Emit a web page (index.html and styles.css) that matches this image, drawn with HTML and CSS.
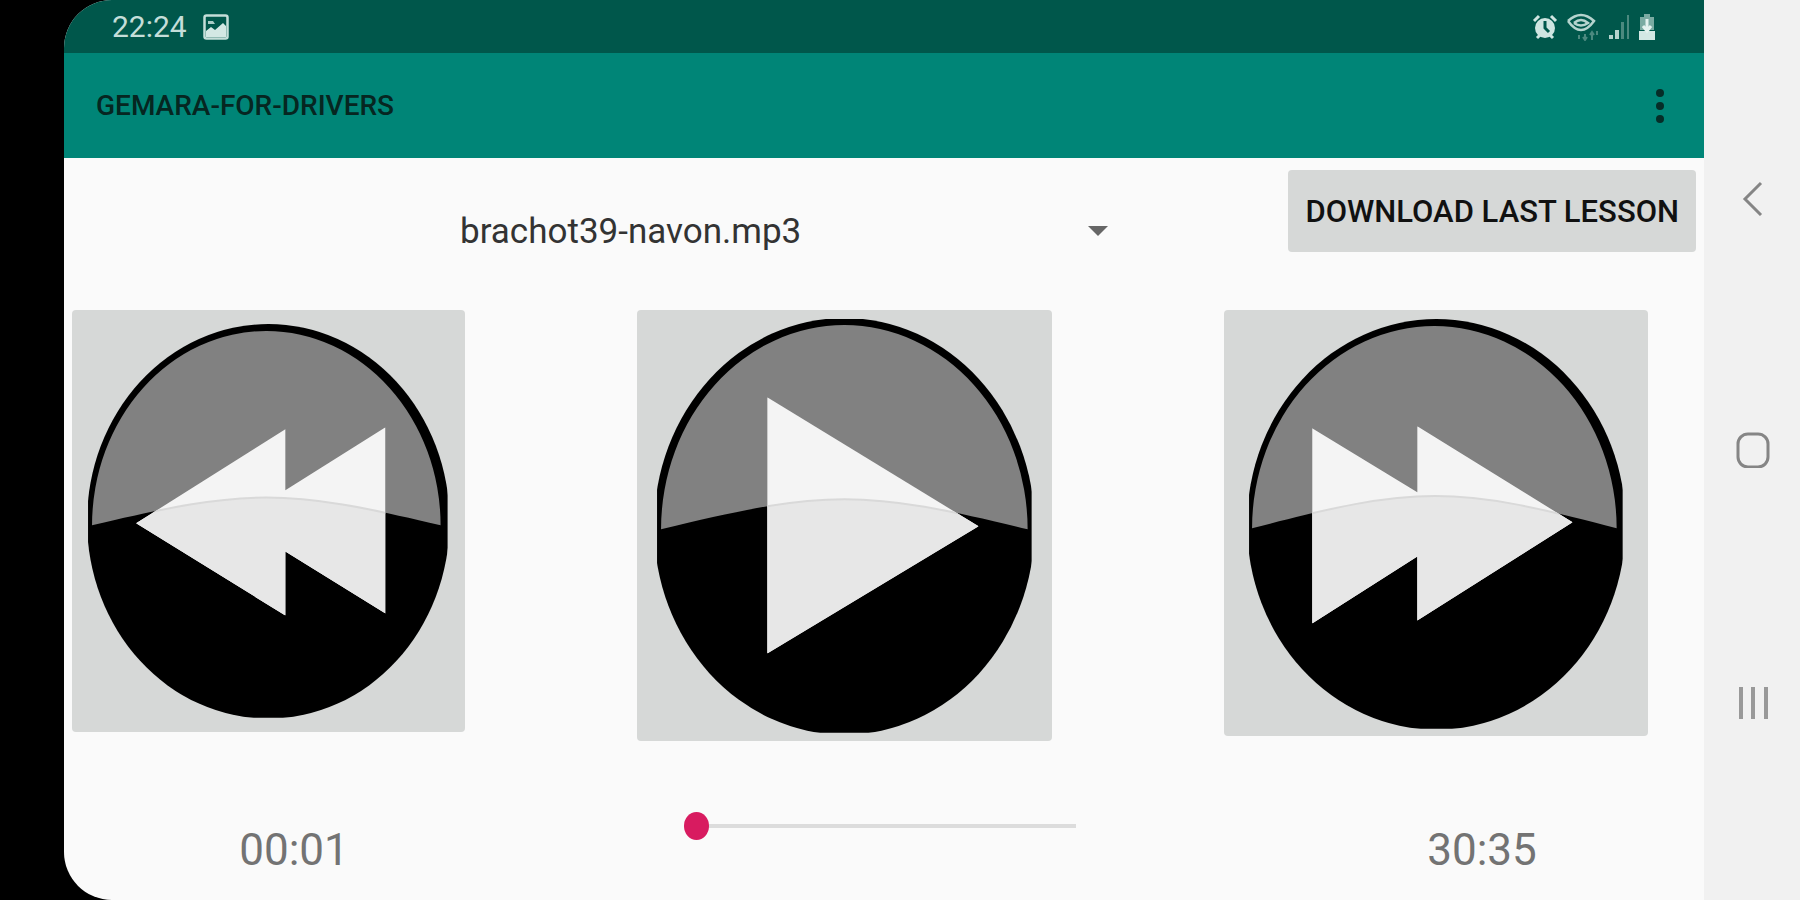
FILE: index.html
```html
<!DOCTYPE html>
<html lang="en">

	<head>
		<meta charset="UTF-8">
		<title>GEMARA-FOR-DRIVERS</title>
		<link rel="stylesheet" href="styles.css">
	</head>

	<body>
		<div class="screen">
			<div class="status">
				<span class="clock">22:24</span>
				<svg class="pic" width="26" height="26" viewBox="0 0 26 26">
					<rect x="1.5" y="1.5" width="23" height="23" rx="2" fill="none" stroke="#c4ded9" stroke-width="2.5" />
					<path d="M3 23v-6l5-4 4 3 8-7 3 3v11z" fill="#d3e8e4" />
					<path d="M5 7h5l2 3H5z" fill="#a9cdc6" />
				</svg>
				<div class="icons">
					<svg width="26" height="26" viewBox="0 0 26 26">
						<circle cx="13" cy="14" r="10" fill="#cfe5e1" />
						<path d="M2 7l5-5M24 7l-5-5M5 24l3-3M21 24l-3-3" stroke="#cfe5e1" stroke-width="3" />
						<path d="M13 7v7l4 4" fill="none" stroke="#00574b" stroke-width="3" />
					</svg>
					<svg width="34" height="28" viewBox="0 0 34 28">
						<path d="M2 8q13-12 26 0q-13 18-26 0M8 10q7-6 14 0q-7 5-14 0" fill="none" stroke="#b5d4ce" stroke-width="2.5" />
						<path d="M13 22v4M19 21v6M17 24l2 3 2-3M26 27v-7M24 22l2-3 2 3M31 18v4" fill="none" stroke="#4b897f" stroke-width="2" />
					</svg>
					<svg width="22" height="26" viewBox="0 0 22 26">
						<path d="M1 21h4v4H1zM7 16h4v9H7z" fill="#b5d4ce" />
						<path d="M13 8h3v17h-3zM19 1h2v24h-2z" fill="#4b897f" />
					</svg>
					<svg width="18" height="28" viewBox="0 0 18 28">
						<path d="M6 1h6v3h4v13H2V4h4z" fill="#7aaba2" />
						<path d="M1 18h16v9H1z" fill="#d3e8e4" />
						<path d="M9 6v12M5 13l4 5 4-5" fill="none" stroke="#e4f2ef" stroke-width="3" />
					</svg>
				</div>
			</div>
			<div class="bar">
				<h1>GEMARA-FOR-DRIVERS</h1>
				<button class="more" aria-label="More options">
					<svg width="8" height="36" viewBox="0 0 8 36">
						<circle cx="4" cy="5" r="4" />
						<circle cx="4" cy="18" r="4" />
						<circle cx="4" cy="31" r="4" />
					</svg>
				</button>
			</div>
			<div class="top">
				<div class="lesson">
					<select aria-label="Lesson">
						<option>brachot39-navon.mp3</option>
					</select>
				</div>
				<button class="download">DOWNLOAD LAST LESSON</button>
			</div>
			<div class="controls">
				<button aria-label="Rewind">
					<svg viewBox="0 0 392 421">
						<clipPath id="disc1"><rect x="16" y="14" width="359" height="393" /></clipPath>
						<clipPath id="arrow1"><path d="M64 213L213 119V180L313 117V303L213 241V305z" /></clipPath>
						<ellipse cx="196" cy="211" rx="181" ry="197" clip-path="url(#disc1)" />
						<path d="M20 215A174 194 0 0 1 368 215C213 178 175 178 20 215z" fill="#818181" />
						<g clip-path="url(#arrow1)">
							<rect width="392" height="421" fill="#f4f4f4" />
							<path d="M20 215C175 178 213 178 368 215V421H20z" fill="#e7e7e7" stroke="#d9d9d9" stroke-width="2" />
						</g>
					</svg>
				</button>
				<button aria-label="Play">
					<svg viewBox="0 0 415 430">
						<clipPath id="disc2"><rect x="20" y="9" width="374" height="413" /></clipPath>
						<clipPath id="arrow2"><path d="M130 87L341 216L130 343z" /></clipPath>
						<ellipse cx="207" cy="216" rx="190" ry="208" clip-path="url(#disc2)" />
						<path d="M24 219A183 204 0 0 1 390 219C227 179 187 179 24 219z" fill="#818181" />
						<g clip-path="url(#arrow2)">
							<rect width="415" height="430" fill="#f4f4f4" />
							<path d="M24 219C187 179 227 179 390 219V430H24z" fill="#e7e7e7" stroke="#d9d9d9" stroke-width="2" />
						</g>
					</svg>
				</button>
				<button aria-label="Fast forward">
					<svg viewBox="0 0 423 425">
						<clipPath id="disc3"><rect x="25" y="9" width="373" height="409" /></clipPath>
						<clipPath id="arrow3"><path d="M88 118L193 182V116L348 212L193 310V246L88 313z" /></clipPath>
						<ellipse cx="212" cy="214" rx="189" ry="205" clip-path="url(#disc3)" />
						<path d="M28 218A182 202 0 0 1 392 218C231 175 191 175 28 218z" fill="#818181" />
						<g clip-path="url(#arrow3)">
							<rect width="423" height="425" fill="#f4f4f4" />
							<path d="M28 218C191 175 231 175 392 218V425H28z" fill="#e7e7e7" stroke="#d9d9d9" stroke-width="2" />
						</g>
					</svg>
				</button>
			</div>
			<div class="seek">
				<span class="time">00:01</span>
				<input type="range" min="0" max="1835" value="1" aria-label="Position">
				<span class="time">30:35</span>
			</div>
		</div>
		<div class="nav">
			<button aria-label="Back">
				<svg width="36" height="36" viewBox="0 0 36 36">
					<path d="M27 3L11 19L27 35" />
				</svg>
			</button>
			<button aria-label="Home">
				<svg width="36" height="36" viewBox="0 0 36 36">
					<rect x="4" y="2" width="30" height="33" rx="10" />
				</svg>
			</button>
			<button aria-label="Recent apps">
				<svg width="36" height="36" viewBox="0 0 36 36">
					<path d="M7 3v32M19 3v32M32 3v32" stroke="#999" stroke-width="4" />
				</svg>
			</button>
		</div>
	</body>

</html>
```
FILE: styles.css
```css
* {
	margin: 0;
	padding: 0;
	box-sizing: border-box;
}

body {
	display: flex;
	min-height: 100vh;
	padding-left: 64px;
	background: linear-gradient(to right, #000 50%, #f1f1f1 50%);
	font-family: Roboto, "Liberation Sans", sans-serif;
}

button {
	border: none;
	background: none;
	font-family: inherit;
	cursor: pointer;
}

svg {
	display: block;
}

.screen {
	flex: 1;
	min-width: 0;
	background: #fafafa;
	border-radius: 48px 0 0 48px;
	overflow: hidden;
}

.status {
	display: flex;
	align-items: center;
	height: 53px;
	padding: 0 48px;
	background: #00574b;
}

.clock {
	font-size: 30px;
	color: #c4ded9;
}

.pic {
	margin-left: 16px;
}

.icons {
	display: flex;
	align-items: center;
	gap: 8px;
	margin-left: auto;
}

.bar {
	display: flex;
	align-items: center;
	justify-content: space-between;
	height: 105px;
	padding: 0 32px;
	background: #008577;
}

.bar h1 {
	font-size: 28px;
	font-weight: 500;
	color: #062621;
}

.more {
	padding: 8px;
	fill: #062d28;
}

.top {
	display: flex;
	align-items: flex-start;
	justify-content: space-between;
	height: 152px;
	padding: 12px 8px 0 396px;
}

.lesson {
	position: relative;
	width: 656px;
	margin-top: 32px;
}

.lesson select {
	width: 100%;
	height: 58px;
	border: none;
	background: none;
	appearance: none;
	font-family: inherit;
	font-size: 35px;
	color: #333;
}

.lesson::after {
	content: "";
	position: absolute;
	right: 8px;
	top: 24px;
	border: 10px solid transparent;
	border-top-color: #666;
	border-bottom: none;
	pointer-events: none;
}

.download {
	height: 82px;
	padding: 0 17px;
	border-radius: 4px;
	background: #d6d8d7;
	font-size: 31px;
	font-weight: 500;
	color: #111;
}

.controls {
	display: grid;
	grid-template-columns: 392fr 415fr 423fr;
	align-items: start;
	column-gap: 172px;
	padding: 0 56px 0 8px;
}

.controls button {
	border-radius: 4px;
	background: #d6d8d7;
}

.controls svg {
	width: 100%;
}

.seek {
	display: grid;
	grid-template-columns: 460fr 736fr 444fr;
	padding-top: 71px;
}

.time {
	padding-top: 10px;
	font-size: 44px;
	line-height: 56px;
	text-align: center;
	color: #737373;
}

.seek input {
	width: 392px;
	height: 28px;
	margin-left: 160px;
	appearance: none;
	background: linear-gradient(#dcdcdc, #dcdcdc) center / 100% 4px no-repeat;
}

.seek input::-webkit-slider-thumb {
	appearance: none;
	width: 25px;
	height: 28px;
	border-radius: 50%;
	background: #d81b60;
}

.nav {
	display: flex;
	flex-direction: column;
	width: 96px;
	padding: 72px 0;
	background: #f1f1f1;
}

.nav button {
	display: flex;
	flex: 1;
	align-items: center;
	justify-content: center;
}

.nav svg {
	fill: none;
	stroke: #858585;
	stroke-width: 3;
}
```
